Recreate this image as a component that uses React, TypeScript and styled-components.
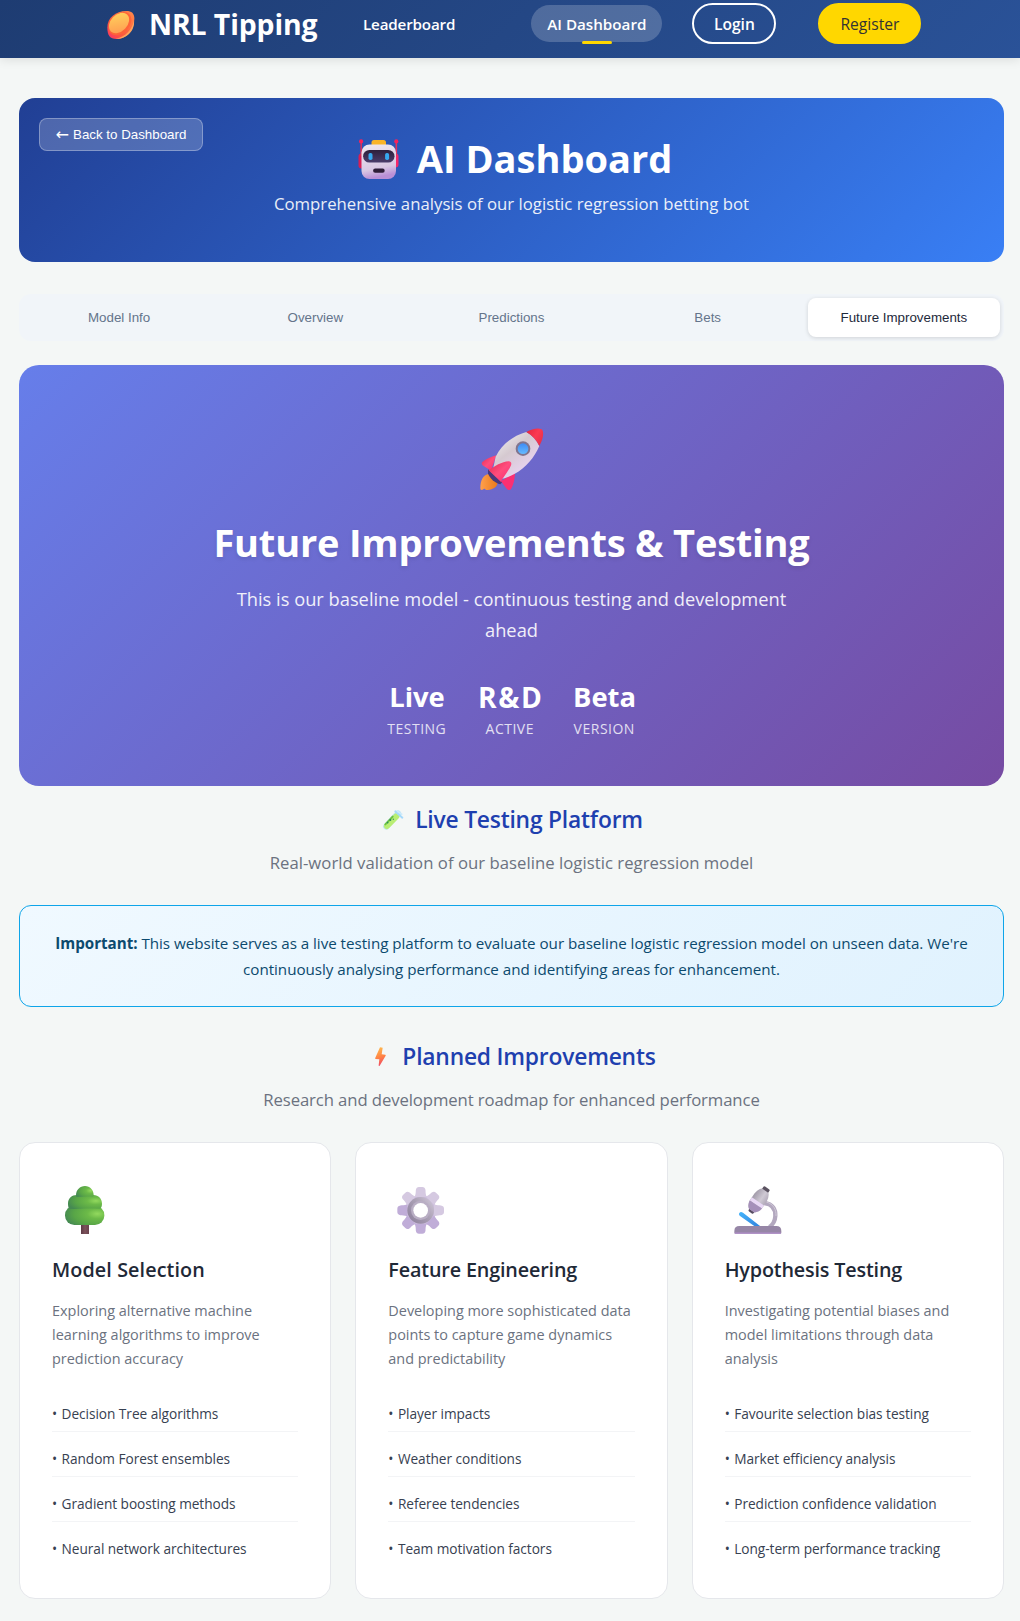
import React from "react";
import styled, { createGlobalStyle } from "styled-components";

const sans = `"Open Sans", "Noto Sans", sans-serif`;
const arial = `"Liberation Sans", Arial, sans-serif`;

const GlobalStyle = createGlobalStyle`
  *, *::before, *::after { box-sizing: border-box; }
  body { margin: 0; background: #f4f7f6; font-family: ${sans}; color: #1f2937; }
  h1, h2, h3, p, ul { margin: 0; padding: 0; }
  ul { list-style: none; }
  svg { display: block; flex: none; }
`;

/* ---------- header ---------- */

const Header = styled.header`
  display: flex;
  align-items: center;
  height: 58px;
  padding: 0 0 11px 107px;
  background: linear-gradient(135deg, #1e3c72 0%, #2a5298 100%);
  box-shadow: 0 2px 10px rgba(0, 0, 0, 0.1);
`;

const Brand = styled.div`
  display: flex;
  align-items: center;
  gap: 11px;
  width: 240px;
  color: #fff;
  font-size: 28.4px;
  font-weight: 700;
  line-height: 40px;
  letter-spacing: -0.1px;
  white-space: nowrap;

  svg { margin-top: 2px; }
`;

const Nav = styled.nav`
  display: flex;
  align-items: center;
`;

const NavLink = styled.a<{ $active?: boolean; $track?: number }>`
  position: relative;
  padding: 8px 16px 7px;
  border-radius: 20px;
  background: ${(p) => (p.$active ? "rgba(255, 255, 255, 0.2)" : "transparent")};
  color: #fff;
  font-size: 15.2px;
  font-weight: 600;
  line-height: 22px;
  letter-spacing: ${(p) => p.$track ?? 0}px;
  white-space: nowrap;

  &::after {
    content: "";
    display: ${(p) => (p.$active ? "block" : "none")};
    position: absolute;
    left: calc(50% - 15px);
    bottom: -2px;
    width: 30px;
    height: 3px;
    border-radius: 2px;
    background: #ffd700;
  }
`;

const NavGroup = styled.div`
  display: flex;
  align-items: center;
  margin-left: 60px;
  gap: 30px;
`;

const PillButton = styled.a<{ $solid?: boolean }>`
  display: flex;
  align-items: center;
  justify-content: center;
  width: ${(p) => (p.$solid ? 103 : 84)}px;
  height: 41px;
  padding-top: 1px;
  margin-left: ${(p) => (p.$solid ? 12 : 0)}px;
  border: 2px solid ${(p) => (p.$solid ? "#ffd700" : "#fff")};
  border-radius: 20.5px;
  background: ${(p) => (p.$solid ? "#ffd700" : "transparent")};
  color: ${(p) => (p.$solid ? "#333" : "#fff")};
  font-size: 15.6px;
  font-weight: ${(p) => (p.$solid ? 500 : 600)};
  line-height: 22px;
`;

/* ---------- page ---------- */

const Page = styled.main`
  padding: 40px 16px 22px 19px;
`;

const Hero = styled.section`
  position: relative;
  height: 164px;
  padding-top: 36px;
  border-radius: 16px;
  background: linear-gradient(135deg, #213f94 0%, #397ff5 100%);
  color: #fff;
  text-align: center;
`;

const BackButton = styled.button`
  position: absolute;
  left: 20px;
  top: 20px;
  display: flex;
  align-items: center;
  justify-content: center;
  gap: 4px;
  width: 164px;
  height: 33px;
  padding: 0;
  border: 1px solid rgba(255, 255, 255, 0.3);
  border-radius: 8px;
  background: rgba(255, 255, 255, 0.2);
  color: #fff;
  font: 400 13.33px ${arial};
`;

const Arrow = styled.span`
  font: 16px/15px "DejaVu Sans", sans-serif;
`;

const HeroTitle = styled.h1`
  display: flex;
  align-items: center;
  justify-content: center;
  gap: 11px;
  font-size: 38px;
  font-weight: 700;
  line-height: 48px;
`;

const HeroText = styled.p`
  margin-top: 8px;
  font-size: 16.75px;
  line-height: 28px;
  opacity: 0.9;
`;

const Tabs = styled.div`
  display: grid;
  grid-template-columns: repeat(5, 1fr);
  gap: 4px;
  margin: 32px 0 24px;
  padding: 4px;
  border-radius: 12px;
  background: #f1f5f9;
`;

const Tab = styled.button<{ $active?: boolean }>`
  height: 39px;
  padding: 0;
  border: 0;
  border-radius: 8px;
  background: ${(p) => (p.$active ? "#fff" : "transparent")};
  box-shadow: ${(p) => (p.$active ? "0 1px 4px rgba(0, 0, 0, 0.14)" : "none")};
  color: ${(p) => (p.$active ? "#1e293b" : "#64748b")};
  font: 400 13.33px ${arial};
`;

const Banner = styled.section`
  display: flex;
  flex-direction: column;
  align-items: center;
  height: 421px;
  padding-top: 55px;
  border-radius: 20px;
  background: linear-gradient(135deg, #667eea 0%, #764ba2 100%);
  color: #fff;
  text-align: center;
`;

const BannerTitle = styled.h2`
  margin-top: 23px;
  font-size: 38px;
  font-weight: 700;
  line-height: 48px;
  letter-spacing: -0.2px;
  text-shadow: 0 2px 4px rgba(0, 0, 0, 0.1);
`;

const BannerText = styled.p`
  width: 600px;
  margin-top: 17px;
  font-size: 18.3px;
  line-height: 31px;
  opacity: 0.9;
`;

const Stats = styled.div`
  display: flex;
  gap: 32px;
  margin-top: 35px;
`;

const Stat = styled.div<{ $width: number }>`
  display: flex;
  flex-direction: column;
  align-items: center;
  width: ${(p) => p.$width}px;
`;

const StatValue = styled.div<{ $track: number; $size: number }>`
  font-size: ${(p) => p.$size}px;
  font-weight: 700;
  line-height: 34px;
  letter-spacing: ${(p) => p.$track}px;
  margin-right: ${(p) => -p.$track}px;
  white-space: nowrap;
`;

const StatLabel = styled.div`
  margin: 3px 0.5px 0 0;
  font-size: 14px;
  line-height: 23px;
  letter-spacing: 0.5px;
  text-transform: uppercase;
  opacity: 0.8;
`;

const SectionHeader = styled.header<{ $top: number }>`
  margin: ${(p) => p.$top}px 0 28px;
  text-align: center;
`;

const SectionTitle = styled.h2`
  display: flex;
  align-items: center;
  justify-content: center;
  gap: 5px;
  padding-right: 3px;
  color: #1e40af;
  font-size: 22.8px;
  font-weight: 600;
  line-height: 32px;
  letter-spacing: -0.2px;

  svg { margin-top: -1px; }
`;

const SectionText = styled.p<{ $track: number }>`
  margin-top: 13px;
  color: #6b7280;
  font-size: 16.72px;
  line-height: 28px;
  letter-spacing: ${(p) => p.$track}px;
`;

const Notice = styled.div`
  padding: 24px 32px;
  border: 1px solid #0ea5e9;
  border-radius: 12px;
  background: linear-gradient(135deg, #f0f9ff 0%, #e0f2fe 100%);
  color: #0c4a6e;
  font-size: 15.2px;
  line-height: 26px;
  letter-spacing: -0.035px;
  text-align: center;
`;

const Cards = styled.div`
  display: grid;
  grid-template-columns: repeat(3, 1fr);
  gap: 24px;
`;

const Card = styled.article`
  height: 457px;
  padding: 32px;
  border: 1px solid #e5e7eb;
  border-radius: 16px;
  background: #fff;
`;

const CardTitle = styled.h3<{ $track: number }>`
  margin-top: 10px;
  color: #1f2937;
  font-size: 19.76px;
  font-weight: 600;
  line-height: 28px;
  letter-spacing: ${(p) => p.$track}px;
`;

const CardText = styled.p`
  height: 73px;
  margin-top: 15px;
  color: #6b7280;
  font-size: 14.44px;
  line-height: 24.2px;
`;

const List = styled.ul`
  margin-top: 15px;
`;

const Item = styled.li`
  height: 45px;
  padding-top: 16px;
  border-bottom: 1px solid #f3f4f6;
  color: #374151;
  font-size: 13.68px;
  line-height: 22px;
  letter-spacing: -0.05px;

  &::before { content: "•"; margin-right: 4.5px; }
  &:last-child { border-bottom: 0; }
`;

/* ---------- illustrations ---------- */

const Football = () => (
  <svg width="31" height="30" viewBox="24 30 93 90">
    <defs>
      <linearGradient id="fbOuter" x1="0" y1="1" x2="1" y2="0">
        <stop offset="0" stopColor="#f9336a" />
        <stop offset="0.35" stopColor="#ff5a3c" />
        <stop offset="1" stopColor="#ff8a4c" />
      </linearGradient>
      <linearGradient id="fbInner" x1="0" y1="1" x2="1" y2="0">
        <stop offset="0" stopColor="#ff9650" />
        <stop offset="1" stopColor="#ffd85e" />
      </linearGradient>
    </defs>
    <path d="M25 82C25 54 50 33 82 33C98 33 106 40 106 56C106 92 82 117 52 117C33 117 25 108 25 82Z" fill="url(#fbOuter)" />
    <path d="M50 116C82 110 98 88 105 62C108 92 82 119 50 116Z" fill="#ffa45c" />
    <ellipse cx="63" cy="71" rx="40" ry="28" transform="rotate(-46 63 71)" fill="#ff6338" />
    <ellipse cx="60" cy="69" rx="35" ry="25" transform="rotate(-46 60 69)" fill="url(#fbInner)" />
  </svg>
);

const Robot = () => (
  <svg width="55" height="48" viewBox="-7.5 -5 55 48">
    <defs>
      <linearGradient id="rbHead" x1="0" y1="0" x2="0.2" y2="1">
        <stop offset="0" stopColor="#efe8f0" />
        <stop offset="0.75" stopColor="#d9c8e3" />
        <stop offset="1" stopColor="#b98fd6" />
      </linearGradient>
      <linearGradient id="rbVisor" x1="0" y1="0" x2="0" y2="1">
        <stop offset="0" stopColor="#2d1f3b" />
        <stop offset="1" stopColor="#4b3d6b" />
      </linearGradient>
    </defs>
    <rect x="0" y="14.5" width="7" height="15" rx="3" fill="#d81e55" />
    <rect x="33" y="14.5" width="7" height="14" rx="3" fill="#f5286a" />
    <rect x="1.9" y="2" width="1.6" height="15" fill="#d5305c" />
    <rect x="37" y="2" width="1.6" height="15" fill="#e0325f" />
    <circle cx="2.6" cy="2.4" r="2.1" fill="#f7225c" />
    <circle cx="37.8" cy="2.4" r="2.1" fill="#f7225c" />
    <rect x="13" y="1" width="14.5" height="7" rx="2.5" fill="#f9b428" />
    <rect x="3" y="5.5" width="34.5" height="34.5" rx="8" fill="url(#rbHead)" />
    <rect x="4.6" y="11" width="31.4" height="12.6" rx="6.3" fill="url(#rbVisor)" />
    <rect x="10" y="14" width="4" height="7" rx="1.8" fill="#36a8ef" />
    <rect x="26.6" y="14" width="4" height="7" rx="1.8" fill="#36a8ef" />
    <rect x="14.6" y="29.6" width="11.6" height="4.2" rx="2.1" fill="#2e1d38" />
  </svg>
);

const Rocket = () => (
  <svg width="80" height="75" viewBox="5 0 240 225">
    <defs>
      <linearGradient id="rkBody" x1="0.2" y1="0.1" x2="0.75" y2="0.8">
        <stop offset="0" stopColor="#e9e6e8" />
        <stop offset="0.4" stopColor="#d5c9d0" />
        <stop offset="1" stopColor="#e9d3f0" />
      </linearGradient>
      <linearGradient id="rkNose" x1="0" y1="0" x2="1" y2="0.6">
        <stop offset="0" stopColor="#e2243c" />
        <stop offset="0.6" stopColor="#fb3a52" />
        <stop offset="1" stopColor="#e8304a" />
      </linearGradient>
      <linearGradient id="rkFin" x1="0" y1="0" x2="1" y2="1">
        <stop offset="0" stopColor="#e42a4f" />
        <stop offset="0.5" stopColor="#ff4d7d" />
        <stop offset="1" stopColor="#f92a74" />
      </linearGradient>
      <linearGradient id="rkFire" x1="0" y1="0" x2="1" y2="0">
        <stop offset="0" stopColor="#ffa04c" />
        <stop offset="1" stopColor="#ea7a1c" />
      </linearGradient>
      <linearGradient id="rkGlass" x1="0" y1="0" x2="0" y2="1">
        <stop offset="0" stopColor="#3f8cf5" />
        <stop offset="1" stopColor="#66baff" />
      </linearGradient>
    </defs>
    <path d="M53 162C40 166 30 178 30 205C30 211 35 212 40 207C46 204 44 212 52 210C68 208 82 200 81 188Z" fill="url(#rkFire)" />
    <path d="M53 148L96 186L90 193C74 190 57 174 53 160Z" fill="#47397c" />
    <path d="M78 106C62 110 48 117 36 126C32 130 35 135 40 138L62 152Z" fill="url(#rkFin)" />
    <path d="M92 184L134 156C134 177 129 196 122 207C119 212 113 210 109 206Z" fill="#fb2f72" />
    <path d="M168 36C126 48 94 74 76 110L68 148L84 176C96 178 118 170 132 162C168 143 192 112 207 78C198 60 186 46 168 36Z" fill="url(#rkBody)" />
    <path d="M168 36C185 26 205 22 214 28C222 34 219 58 207 78C198 60 186 46 168 36Z" fill="url(#rkNose)" />
    <path d="M55 151C72 139 95 125 115 124C124 124 125 132 120 140C110 160 98 172 92 186Z" fill="url(#rkFin)" />
    <circle cx="158" cy="86" r="22" fill="#81758f" />
    <circle cx="158" cy="86" r="16" fill="url(#rkGlass)" />
  </svg>
);

const TestTube = () => (
  <svg width="33" height="32" viewBox="1133 101 99 96">
    <path d="M1196 130L1161 168" stroke="#bfe3f4" strokeWidth="19" strokeLinecap="round" />
    <path d="M1191 138L1163 167" stroke="#b9ee74" strokeWidth="18" strokeLinecap="round" />
    <path d="M1180 139L1158 162" stroke="#6cc244" strokeWidth="6" strokeLinecap="round" />
    <path d="M1188 123L1209 142" stroke="#a5d9fb" strokeWidth="6" strokeLinecap="round" />
    <path d="M1193 122L1200 127L1209 133" stroke="#cdebfc" strokeWidth="5" />
    <circle cx="1173" cy="149" r="3" fill="#2f8a5e" />
    <circle cx="1165" cy="157" r="2.4" fill="#2f8a5e" />
    <circle cx="1182" cy="147" r="2.2" fill="#3e9a5e" />
  </svg>
);

const Bolt = () => (
  <svg width="33" height="32" viewBox="1094 812 99 96">
    <defs>
      <linearGradient id="bolt" x1="0.4" y1="0" x2="0.6" y2="1">
        <stop offset="0" stopColor="#ffb84d" />
        <stop offset="0.5" stopColor="#ff8445" />
        <stop offset="1" stopColor="#ee4668" />
      </linearGradient>
    </defs>
    <path d="M1142 831L1150 832L1147 852L1158 853Q1160 854 1159 856L1141 886Q1138 889 1138 885L1140 867L1129 866Q1126 865 1128 862Z" fill="url(#bolt)" />
  </svg>
);

const Tree = () => (
  <svg width="66" height="71" viewBox="156 135 198 213">
    <defs>
      <linearGradient id="trTrunk" x1="0" y1="0" x2="1" y2="0">
        <stop offset="0" stopColor="#5d3a45" />
        <stop offset="0.5" stopColor="#7c525b" />
        <stop offset="1" stopColor="#69424d" />
      </linearGradient>
      <radialGradient id="trLeaf" cx="0.82" cy="0.42" r="0.85">
        <stop offset="0" stopColor="#93d95e" />
        <stop offset="0.3" stopColor="#6cba48" />
        <stop offset="0.7" stopColor="#58a547" />
        <stop offset="1" stopColor="#458a52" />
      </radialGradient>
    </defs>
    <rect x="243" y="278" width="24" height="34" fill="url(#trTrunk)" />
    <rect x="195" y="227" width="118" height="58" rx="28" fill="url(#trLeaf)" />
    <path d="M204 221C204 205 216 195 230 195H280C296 195 306 206 306 221C306 229 304 233 300 236C266 234 240 236 208 237C205 232 204 228 204 221Z" fill="url(#trLeaf)" />
    <path d="M228 196C228 180 240 168 255 168C270 168 281 180 281 195C281 198 280 199 278 200C262 199 246 200 230 201C228 200 228 199 228 196Z" fill="url(#trLeaf)" />
  </svg>
);

const Gear = () => (
  <svg width="66" height="71" viewBox="-98 -106 198 213">
    <defs>
      <linearGradient id="grRing" x1="1" y1="0" x2="0" y2="0.8">
        <stop offset="0" stopColor="#d4cbdc" />
        <stop offset="0.5" stopColor="#aaa0b4" />
        <stop offset="1" stopColor="#8f829e" />
      </linearGradient>
      <path id="grTooth" d="M-18 -40C-14 -50 -15 -55 -14.500 -61Q-13 -70 -5 -70H5Q13 -70 14.500 -61C15 -55 14 -50 18 -40Z" />
    </defs>
    <circle r="45" fill="#cbbcdc" />
    {[0, 45, 90, 135, 180, 225, 270, 315].map((angle) => (
      <use key={angle} href="#grTooth" transform={`rotate(${angle})`} fill={angle > 90 && angle < 300 ? "#c0add8" : "#d5c9e1"} />
    ))}
    <circle r="40" fill="url(#grRing)" />
    <circle r="29" fill="#b9aec4" />
    <circle r="22" fill="#fff" />
  </svg>
);

const Microscope = () => (
  <svg width="66" height="71" viewBox="644 135 198 213">
    <defs>
      <linearGradient id="msTube" x1="0" y1="0" x2="1" y2="0">
        <stop offset="0" stopColor="#a19aa9" />
        <stop offset="0.6" stopColor="#cfc9d4" />
        <stop offset="1" stopColor="#b3abbb" />
      </linearGradient>
      <linearGradient id="msSlide" x1="0" y1="0" x2="1" y2="1">
        <stop offset="0" stopColor="#45b4fb" />
        <stop offset="1" stopColor="#3181dc" />
      </linearGradient>
    </defs>
    <path d="M762 219C788 222 796 240 795 258C794 274 788 284 777 291" fill="none" stroke="#b3a8bf" strokeWidth="13" />
    <path d="M768 216C790 222 798 240 797 258" fill="none" stroke="#cfc8d6" strokeWidth="3" />
    <path d="M687 249Q691 243 698 248L752 290H735L688 257Q684 253 687 249Z" fill="url(#msSlide)" />
    <path d="M672 303Q672 288 687 288H798Q813 288 813 303V308Q813 311 810 311H675Q672 311 672 308Z" fill="#9686a6" />
    <rect x="673" y="307.500" width="139" height="3.500" rx="1.700" fill="#b08cc9" />
    <g transform="translate(745 211) rotate(34)">
      <rect x="-11" y="-45" width="22" height="16" rx="4" fill="#5b5361" />
      <rect x="-9" y="28" width="18" height="16" rx="4" fill="#574c62" />
      <path d="M-12 -35H12Q21 -26 22 -10V16Q20 30 10 37H-10Q-20 30 -22 16V-10Q-21 -26 -12 -35Z" fill="url(#msTube)" />
      <path d="M-22 4H22V15H-22Z" fill="#e9d8f6" />
      <path d="M-22 15H22Q20 30 10 37H-10Q-20 30 -22 15Z" fill="#a58fba" />
    </g>
  </svg>
);

/* ---------- content ---------- */

const tabs = ["Model Info", "Overview", "Predictions", "Bets", "Future Improvements"];

const stats = [
  { value: "Live", label: "Testing", width: 58, track: 0, size: 27.4 },
  { value: "R&D", label: "Active", width: 64, track: 1.6, size: 28.2 },
  { value: "Beta", label: "Version", width: 61, track: 0, size: 27.4 },
];

const cards = [
  {
    Icon: Tree,
    title: "Model Selection",
    track: 0.1,
    text: "Exploring alternative machine learning algorithms to improve prediction accuracy",
    items: ["Decision Tree algorithms", "Random Forest ensembles", "Gradient boosting methods", "Neural network architectures"],
  },
  {
    Icon: Gear,
    title: "Feature Engineering",
    track: -0.15,
    text: "Developing more sophisticated data points to capture game dynamics and predictability",
    items: ["Player impacts", "Weather conditions", "Referee tendencies", "Team motivation factors"],
  },
  {
    Icon: Microscope,
    title: "Hypothesis Testing",
    track: -0.16,
    text: "Investigating potential biases and model limitations through data analysis",
    items: ["Favourite selection bias testing", "Market efficiency analysis", "Prediction confidence validation", "Long-term performance tracking"],
  },
];

export default function App() {
  return (
    <>
      <GlobalStyle />
      <Header>
        <Brand>
          <Football />
          NRL Tipping
        </Brand>
        <Nav>
          <NavLink $track={-0.17}>Leaderboard</NavLink>
          <NavGroup>
            <NavLink $active>AI Dashboard</NavLink>
            <PillButton>Login</PillButton>
            <PillButton $solid>Register</PillButton>
          </NavGroup>
        </Nav>
      </Header>
      <Page>
        <Hero>
          <BackButton>
            <Arrow>←</Arrow>
            Back to Dashboard
          </BackButton>
          <HeroTitle>
            <Robot />
            AI Dashboard
          </HeroTitle>
          <HeroText>Comprehensive analysis of our logistic regression betting bot</HeroText>
        </Hero>
        <Tabs>
          {tabs.map((tab) => (
            <Tab key={tab} $active={tab === "Future Improvements"}>
              {tab}
            </Tab>
          ))}
        </Tabs>
        <Banner>
          <Rocket />
          <BannerTitle>Future Improvements &amp; Testing</BannerTitle>
          <BannerText>This is our baseline model - continuous testing and development ahead</BannerText>
          <Stats>
            {stats.map((s) => (
              <Stat key={s.label} $width={s.width}>
                <StatValue $track={s.track} $size={s.size}>{s.value}</StatValue>
                <StatLabel>{s.label}</StatLabel>
              </Stat>
            ))}
          </Stats>
        </Banner>
        <SectionHeader $top={18}>
          <SectionTitle>
            <TestTube />
            Live Testing Platform
          </SectionTitle>
          <SectionText $track={0.03}>Real-world validation of our baseline logistic regression model</SectionText>
        </SectionHeader>
        <Notice>
          <strong>Important:</strong> This website serves as a live testing platform to evaluate our baseline logistic
          regression model on unseen data. We're continuously analysing performance and identifying areas for
          enhancement.
        </Notice>
        <SectionHeader $top={34}>
          <SectionTitle>
            <Bolt />
            Planned Improvements
          </SectionTitle>
          <SectionText $track={-0.1}>Research and development roadmap for enhanced performance</SectionText>
        </SectionHeader>
        <Cards>
          {cards.map(({ Icon, title, track, text, items }) => (
            <Card key={title}>
              <Icon />
              <CardTitle $track={track}>{title}</CardTitle>
              <CardText>{text}</CardText>
              <List>
                {items.map((item) => (
                  <Item key={item}>{item}</Item>
                ))}
              </List>
            </Card>
          ))}
        </Cards>
      </Page>
    </>
  );
}
